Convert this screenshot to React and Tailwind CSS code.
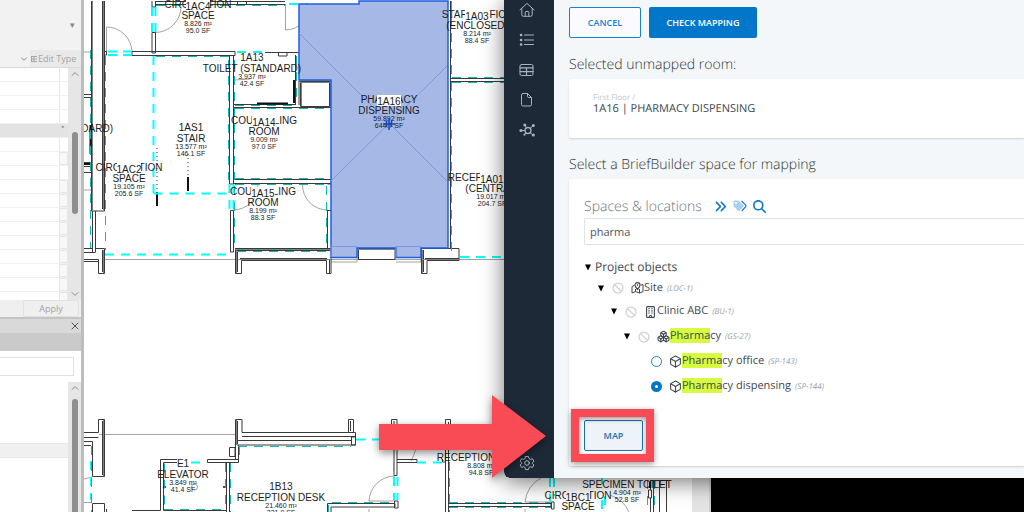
import { useState } from "react";
import { Ban, Box, Boxes, ChevronDown, ChevronUp, X } from "lucide-react";
import { FaAnglesRight, FaMagnifyingGlass } from "react-icons/fa6";

// tag is the room number, printed on a white plate over the first name line
const rooms = [
    { x: 198, y: 8, name: ["CIRCULATION", "SPACE"], tag: "1AC4", area: ["8.826 m²", "95.0 SF"] },
    { x: 129, y: 171, name: ["CIRCULATION", "SPACE"], tag: "1AC2", area: ["19.105 m²", "205.6 SF"] },
    { x: 264, y: 124, name: ["COUNSELING", "ROOM"], tag: "1A14", area: ["9.009 m²", "97.0 SF"] },
    { x: 263, y: 195, name: ["COUNSELING", "ROOM"], tag: "1A15", area: ["8.199 m²", "88.3 SF"] },
    { x: 389, y: 103, name: ["PHARMACY", "DISPENSING"], tag: "1A16", area: ["59.892 m²", "644.7 SF"] },
    { x: 477, y: 18, name: ["STAFF OFFICE", "(ENCLOSED)"], tag: "1A03", area: ["8.214 m²", "88.4 SF"] },
    { x: 492, y: 181, name: ["RECEPTION DESK", "(CENTRAL)"], tag: "1A01", area: ["19.017 m²", "204.7 SF"] },
    { x: 578, y: 499, name: ["CIRCULATION", "SPACE"], tag: "1BC1", area: ["11.204 m²", "120.6 SF"] },
    { x: 252, y: 61, name: ["1A13", "TOILET (STANDARD)"], area: ["3.937 m²", "42.4 SF"] },
    { x: 191, y: 131, name: ["1AS1", "STAIR"], area: ["13.577 m²", "146.1 SF"] },
    { x: 183, y: 467, name: ["E1", "ELEVATOR"], area: ["3.849 m²", "41.4 SF"] },
    { x: 281, y: 490, name: ["1B13", "RECEPTION DESK"], area: ["21.460 m²", "231.0 SF"] },
    { x: 481, y: 450, name: ["1B14", "RECEPTION DESK"], area: ["8.808 m²", "94.8 SF"] },
    { x: 627, y: 477, name: ["1B15", "SPECIMEN TOILET"], area: ["4.904 m²", "52.8 SF"] },
];

const RoomLabel = ({ room }) => {
    const { x, y, name, tag, area } = room;
    return (
        <g textAnchor="middle" fill="#1c1c1c">
            <text x={x} y={y} fontSize="10">{name[0]}</text>
            {tag && <rect x={x - 12} y={y - 8} width="24" height="11" fill="#fff" />}
            <text x={x} y={y + 11} fontSize="10">{name[1]}</text>
            {tag && <text x={x} y={y + 2} fontSize="10">{tag}</text>}
            <text x={x} y={y + 18} fontSize="7">{area[0]}</text>
            <text x={x} y={y + 25} fontSize="7">{area[1]}</text>
        </g>
    );
};

const FloorPlan = () => (
    <svg
        viewBox="84 0 608 512"
        preserveAspectRatio="xMinYMin slice"
        className="h-full min-w-0 flex-1 bg-white"
        fontFamily="'Liberation Sans', Arial, sans-serif"
    >
        {/* door swings and thin guide lines */}
        <g fill="none" stroke="#8b8b8b" strokeWidth="0.8">
            <path d="M106.500 53V27A25.500 25.500 0 0 1 132 52" />
            <path d="M155 32.500A26 26 0 0 0 181 7" />
            <path d="M285.500 4V30A26 26 0 0 0 311 4" />
            <path d="M302.500 185A25 25 0 0 0 328 210M233 210A25 25 0 0 0 258 184" />
            <path d="M104 259.500H504M99 434.500H237M84 52H92M84 190H92M84 479L92 477M84 502.500H92" />
            <path d="M235 80L250 79" />
            <path d="M395 476A26 26 0 0 0 369 501H395M369 509V512" />
            <path d="M411 461Q417 450 418 436" />
            <path d="M525 502A30 30 0 0 1 541 478M525 502H551M525 509V512" />
            <path d="M610 495Q624 500 629 512" />
            <path d="M331 246H357V262H331M396 246H421V262H396" />
            <circle cx="194.500" cy="487" r="3" />
        </g>

        {/* walls, drawn as double lines */}
        <g fill="none" stroke="#3a3a3a" strokeWidth="1">
            <path d="M91.500 1V211H104.500V1M102.500 1V209" />
            <path d="M92.500 211V252M95.500 211V252M84 252.500H95.500M84 248.500H92M95 248.500H104.500V273.500H98.500V259.500H84M84 261.500H98M102.500 250V272" />
            <path d="M84 94.500H91M84 97.500H91M84 162.500H91M84 166.500H91M84 172.500H91" />
            <path d="M104 51.500H106.500V55H104M132 51.500H235V55.500H132ZM152 1V7H155.500V1M152 32.500H155.500V53H152Z" />
            <path d="M155 1.500H285M155 4.500H285M237.500 1V4.500M246.500 1V4.500" />
            <path d="M229.500 55V184H233.500V55M230.500 210.500H233.500V252H230.500Z" />
            <path d="M265 52.500H299M278.500 52.500V56H287V52.500M234 104.500H295M234 107.500H331V81H299V105M295.500 55V105" />
            <path d="M300.500 81.500H329.500V106.500H300.500Z" />
            <path d="M234 179.500H331M234 183.500H331M327.500 210V248M327.500 210.500H331M327.500 184H331" />
            <path d="M235 248.500H331M235 250.500H331M235.500 248V273.500H241.500V260.500H326.500V273.500H331V248M240 258.500H327M237.500 250V272M329.500 260V273" />
            <path d="M358.500 248.500H395V259.500H358.500Z" />
            <path d="M421.500 249V273.500H427V260.500H459V248.500H421M423.500 250V272M425 258.500H459" />
            <path d="M450.500 1V248M447.500 1V248M451 78.500H504M451 81.500H504" />
            <path d="M98.500 437.500H84M84 432.500H98.500V419.500H104.500V476.500H92.500V441.500H84M102.500 421V475M84 445.500H91M92.500 512V503.500H104.500V512M106.500 509V512" />
            <path d="M235.500 460V419.500H242V432.500H355.500V445H237M242 436.500H355M238 440.500H351M351.500 437H355.500V445H351.500Z" />
            <path d="M237.500 421V444M348.500 432V419.500H353.500V432M350.500 421V431" />
            <path d="M229.500 447.500H235V456.500H229.500ZM207.500 459.500H238.500V462.500H207.500ZM238.500 445V462" />
            <path d="M177 459.500H160.500V510.500H132M177 462.500H163.500V510.500H226M226.500 462V512M229.500 462V512" />
            <path d="M391.500 432V419.500H397V475.500H394V421M445.500 512V419.500H450.500V432M448.500 422V512M397 459.500H417V462.500H397M442.500 459V462H445" />
            <path d="M327.500 512V503.500H395V507H331V512M394.500 501H398V508H394.500ZM449 503.500H551V506.500H449M551.500 502H554V509H551.500Z" />
            <path d="M648.500 490H651.500V498H648.500ZM650.500 480V490M650.500 498V512M653.500 480V512M659.500 480V512M666.500 480V512M650 480.500H668" />
        </g>
        <g fill="none" stroke="#808080" strokeWidth="1">
            <path d="M92.500 1V210M103.500 1V210M103.500 250V273M236.500 250V273M235 249.500H331M240 259.500H331" />
            <path d="M358 249.500H395M422.500 250V273M422 259.500H459M103.500 420V476M236.500 420V445M301.500 82V106M330.500 82V107M300 82.500H330" />
        </g>
        <g fill="none" stroke="#111" strokeWidth="2">
            <path d="M157 192V206M188 177V191M257 103.500H288M294 80V103M90.500 125V154M84 164H91M650 482V488" />
            <path d="M163 487H166M223 487H226" strokeWidth="1.500" />
        </g>
        <path d="M157 148V192M188 154V177" stroke="#333" strokeDasharray="1 3" />

        {/* room separation lines */}
        <g fill="none" stroke="#0ff" strokeWidth="2" strokeDasharray="9 7">
            <path d="M153.500 56V193M153.500 193.500H230M105 254.500H230M91 461V500" />
            <path d="M108 51.500H118M123 51.500H132M108 55H118M123 55H132M152 7V33M155.500 7V33" />
            <path d="M229.500 184V210M233.500 184V210M237 52H265M289 4H308M460 257H504" />
            <path d="M191 462.500H201M356 439.500H392M394 477V500M397.500 477V500M417 462.500H444" />
            <path d="M550 478V502M554 478V496M602 478V484M605 496V512M602 500V512" />
        </g>
        <g fill="none" stroke="#12b5b5" strokeWidth="1" strokeDasharray="9 7">
            <path d="M105.500 56V250M90.500 50V248M156 56.500H229M228.500 60V180M234.500 60V180M156 5.500H285" />
            <path d="M235 105.500H295M296.500 56V104M235 108.500H331M235 178.500H331M235 184.500H331M326.500 186V248M234.500 186V250" />
            <path d="M237 251.500H331M451.500 1V78M451.500 82V256M452 77.500H504M452 82.500H504" />
            <path d="M91.500 446V512M238 446.500H351M239.500 446V462M164.500 463.500V510M164 509.500H226M225.500 463V510M230.500 463V512" />
            <path d="M393.500 462V475M332 502.500H395M328.500 505V512M449.500 462V512M449 507.500H551M449 502.500H551M647.500 480V512M654.500 480V512" />
        </g>

        {/* selected room */}
        <path
            d="M299 4H359V1H448V248H421V257.500H396V248H357V257.500H331V80H299Z"
            fill="#a6b8e6"
            stroke="#1c5fdf"
            strokeWidth="1.500"
        />
        <path d="M299 33L447 181M447 66L331 181M331 246.500H357M396 246.500H421M331 246V257M396 246V257" fill="none" stroke="#7c98df" />

        <text x="113" y="132" fontSize="10" textAnchor="end" fill="#1c1c1c">(STANDARD)</text>
        {rooms.map((room) => (
            <RoomLabel key={room.tag || room.name[0]} room={room} />
        ))}
        <path d="M389 118V130M383 124H395M386.500 121V127M391.500 121V127" stroke="#1546b5" strokeWidth="1.500" />
    </svg>
);

const PropertyRow = ({ header, button }) => (
    <div className={`flex h-[14px] border-b border-[#f0f0f0] ${header ? "bg-[#e3e3e3]" : "bg-white"}`}>
        <div className="flex-1" />
        {header ? (
            <span className="pr-1 text-[7px] leading-[6px] text-[#888]">▪</span>
        ) : (
            <div className={`w-[9px] border-[#e6e6e6] ${button ? "border bg-[#f8f8f8]" : "border-l"}`} />
        )}
    </div>
);

const ScrollTrack = ({ children }) => (
    <div className="flex w-[13px] flex-col items-center bg-[#e6e6e6] text-[#8c8c8c]">{children}</div>
);

const PropertiesPanel = () => (
    <aside className="flex w-[84px] shrink-0 flex-col border-r-[3px] border-[#bdbdbd] bg-[#f2f2f2]">
        <div className="flex h-[50px] items-center justify-end pr-[6px] text-[9px] text-[#888]">▾</div>
        <div className="flex h-[18px] items-stretch border-b border-[#dadada]">
            <div className="flex flex-1 items-center justify-end pr-px text-[#777]">
                <ChevronDown size={10} />
            </div>
            <button className="flex w-[51px] items-center gap-px bg-[#e9e9e9] text-[9px] whitespace-nowrap text-[#a5a5a5]">
                <svg width="7" height="8" viewBox="0 0 7 8" fill="none" stroke="currentColor">
                    <path d="M1 1.500H7M1 4H7M1 6.500H7M1.500 1V7M4 1V7" />
                </svg>
                Edit Type
            </button>
        </div>
        <div className="flex h-[232px]">
            <div className="flex-1 overflow-hidden bg-white">
                {[...Array(17)].map((_, i) => (
                    <PropertyRow key={i} header={i === 4} button={i > 5 && i !== 7} />
                ))}
            </div>
            <ScrollTrack>
                <ChevronUp size={12} />
                <div className="mt-[52px] h-[82px] w-[6px] rounded-full bg-[#8f8f8f]" />
                <ChevronDown size={12} className="mt-auto" />
            </ScrollTrack>
        </div>
        <div className="flex h-[17px] justify-end bg-[#efefef] pr-[2px]">
            <button className="w-[56px] rounded-xs border border-[#e2e2e2] text-[9px] leading-[14px] text-[#a3a3a3]">Apply</button>
        </div>
        <div className="flex h-[16px] items-center justify-end border-t-2 border-[#c4c4c4] bg-[#d9d9d9] text-[#555]">
            <X size={12} />
        </div>
        <div className="h-[18px] bg-[#cacaca]" />
        <div className="flex flex-1 flex-col bg-white">
            <input aria-label="Search project browser" className="mt-[6px] mr-[7px] h-[19px] border border-l-0 border-[#e0e0e0] bg-white" />
            <div className="mt-[6px] flex flex-1">
                <div className="flex-1 pt-[61px]">
                    <div className="h-[15px] border-y border-[#e8e8e8] bg-[#f0f0f0]" />
                </div>
                <ScrollTrack>
                    <ChevronUp size={12} />
                    <div className="mt-[5px] w-[6px] flex-1 rounded-t-full bg-[#8f8f8f]" />
                </ScrollTrack>
            </div>
        </div>
    </aside>
);

const NavIcon = ({ label, children }) => (
    <a href="#" aria-label={label} className="flex h-[30px] items-center justify-center text-[#aab2bb]">
        <svg width="16" height="16" viewBox="0 0 16 16" fill="none" stroke="currentColor" strokeLinejoin="round" strokeLinecap="round">
            {children}
        </svg>
    </a>
);

const Sidebar = () => (
    <nav className="flex w-[50px] shrink-0 flex-col rounded-bl-md bg-[#1e2938] pr-1">
        <div className="-mt-[5px] flex flex-1 flex-col">
            <NavIcon label="Home">
                <path d="M1 7.800L8 1.500L15 7.800M2.800 6.500V12.800Q2.800 14.300 4.300 14.300H11.700Q13.200 14.300 13.200 12.800V6.500M6.200 14V10.200Q6.200 9.500 6.900 9.500H9.100Q9.800 9.500 9.800 10.200V14" />
            </NavIcon>
            <NavIcon label="List">
                <path d="M5.500 3H14.500M5.500 8H14.500M5.500 12.500H14.500" />
                <path d="M2 3H2.200M2 8H2.200M2 12.500H2.200" strokeWidth="2.500" />
            </NavIcon>
            <NavIcon label="Table">
                <rect x="1" y="2.500" width="13" height="11" rx="1.500" />
                <path d="M1 5.800H14M1 9.600H14M7.500 5.800V13.500" strokeWidth="1.200" />
            </NavIcon>
            <NavIcon label="Documents">
                <path d="M4 1.500H8.500L12.500 5.500V12.500Q12.500 14 11 14H4Q2.500 14 2.500 12.500V3Q2.500 1.500 4 1.500ZM8.500 1.500V4.300Q8.500 5.500 9.700 5.500H12.500" />
            </NavIcon>
            <NavIcon label="Relations">
                <circle cx="9" cy="8.500" r="3" strokeWidth="1.300" />
                <path d="M6 8.500H2M7.500 6L6 3.500M11.200 6.300L14 3.800M11.200 10.700L14 13M7 10.700L5.500 12.500" />
                <g fill="currentColor" stroke="none">
                    <circle cx="2" cy="8.500" r="1.600" />
                    <circle cx="5.800" cy="3" r="1.500" />
                    <circle cx="14.300" cy="3.500" r="1.500" />
                    <circle cx="14.300" cy="13" r="1.500" />
                    <circle cx="5.500" cy="12.700" r="1.100" />
                </g>
            </NavIcon>
        </div>
        <NavIcon label="Settings">
            <circle cx="8" cy="8" r="2.300" />
            <path d="M6.500 1.500H9.500L10 3.600L11.300 4.400L13.400 3.700L14.900 6.300L13.300 7.800V8.500L14.900 9.900L13.400 12.400L11.300 11.700L10 12.500L9.500 14.600H6.500L6 12.500L4.700 11.700L2.600 12.400L1.100 9.900L2.700 8.500V7.800L1.100 6.300L2.600 3.700L4.700 4.400L6 3.600Z" />
        </NavIcon>
    </nav>
);

const MapIcon = () => (
    <svg width="13" height="12" viewBox="0 0 13 12" fill="none" stroke="currentColor" strokeLinejoin="round">
        <path d="M3 3.500L1 4.500V11L4.500 9.600L8.500 11L12 9.600V2.500L10 3.200M4.500 7V9.600M8.500 7V11" />
        <path d="M6.500 7.500Q3.900 4.500 3.900 3.100A2.600 2.500 0 0 1 9.100 3.100Q9.100 4.500 6.500 7.500Z" strokeWidth="1.200" />
        <circle cx="6.500" cy="3.100" r="0.800" fill="currentColor" stroke="none" />
    </svg>
);

const BuildingIcon = () => (
    <svg width="9" height="12" viewBox="0 0 9 12" fill="none" stroke="currentColor">
        <rect x="0.600" y="0.600" width="7.800" height="10.800" rx="1" strokeWidth="1.100" />
        <path d="M2.300 2.800H3.700M5.300 2.800H6.700M2.300 4.900H3.700M5.300 4.900H6.700M2.300 7H3.700M5.300 7H6.700" strokeWidth="1.100" />
        <path d="M3.500 11.400V9.500H5.500V11.400" strokeWidth="0.900" />
    </svg>
);

const TagsIcon = () => (
    <svg width="14" height="12" viewBox="0 0 14 12">
        <path d="M0.500 1.500Q0.500 0.500 1.500 0.500H5.500L10.500 5.200Q11 5.900 10.500 6.600L6.500 10.800Q5.800 11.400 5.100 10.800L0.500 6.200Z" fill="#a9d0ef" />
        <circle cx="3" cy="3" r="1" fill="#fff" />
        <path d="M8.500 1L12.500 4.800Q13.400 5.800 12.500 6.900L8.800 11" fill="none" stroke="#1379cb" strokeWidth="1.200" />
    </svg>
);

const Caret = () => (
    <svg width="6" height="7" viewBox="0 0 6 7" className="text-black">
        <path d="M0 0.500H6L3 6.500Z" fill="currentColor" />
    </svg>
);

const groups = [
    { name: "Site", code: "LOC-1", icon: <MapIcon />, indent: "pl-[13px]" },
    { name: "Clinic ABC", code: "BU-1", icon: <BuildingIcon />, indent: "pl-[26px]" },
    { name: "Pharmacy", code: "GS-27", icon: <Boxes size={13} />, indent: "pl-[39px]" },
];

const spaces = [
    { name: "Pharmacy office", code: "SP-143" },
    { name: "Pharmacy dispensing", code: "SP-144" },
];

const Label = ({ name, code, query }) => {
    const hit = query && name.toLowerCase().startsWith(query.toLowerCase());
    return (
        <span className="whitespace-nowrap">
            {hit ? <mark className="bg-[#d6fb41] text-inherit">{name.slice(0, query.length)}</mark> : null}
            {hit ? name.slice(query.length) : name}
            <span className="ml-1 text-[8px] text-[#98a1a9] italic">({code})</span>
        </span>
    );
};

const MappingWindow = () => {
    const [query, setQuery] = useState("pharma");
    const [selected, setSelected] = useState("SP-144");

    return (
        <section className="absolute top-0 right-0 left-[504px] flex overflow-hidden rounded-bl-md bg-[#f3f7f9] shadow-[0_4px_22px_rgba(0,0,0,0.55)] [text-rendering:geometricPrecision]">
            <Sidebar />
            <main className="min-w-0 flex-1 pt-[7px] pb-3 pl-[15px]">
                <div className="flex gap-2 text-[9px] font-semibold">
                    <button className="h-[31px] w-[72px] rounded-xs border border-[#1b80cf] bg-[#fafaff] text-[#1b80cf]">CANCEL</button>
                    <button className="h-[31px] w-[108px] rounded-xs bg-[#0277ca] text-white">CHECK MAPPING</button>
                </div>

                <h2 className="mt-4 text-[14px] leading-[22px] font-light text-[#333]">Selected unmapped room:</h2>
                <div className="mt-[3px] h-[59px] rounded-l-xs bg-white pt-[14px] pl-6 shadow-[0_1px_2px_rgba(0,0,0,0.15)]">
                    <p className="text-[8px] leading-[10px] text-[#c0c8ce]">First Floor /</p>
                    <p className="text-[11px] leading-[11px] text-[#3c444b]">1A16 | PHARMACY DISPENSING</p>
                </div>

                <h2 className="mt-4 text-[14px] leading-[22px] font-light text-[#333]">Select a BriefBuilder space for mapping</h2>
                <div className="mt-[3px] rounded-l-xs bg-white pt-[15px] pb-[15px] pl-[15px] shadow-[0_1px_2px_rgba(0,0,0,0.15)]">
                    <div className="flex h-[24px] items-center text-[#1379cb]">
                        <label htmlFor="space-search" className="mr-3 text-[14px] font-light text-[#6a747c]">Spaces &amp; locations</label>
                        <button aria-label="Expand all" className="mr-[6px]"><FaAnglesRight size={13} /></button>
                        <button aria-label="Tags" className="mr-[6px]"><TagsIcon /></button>
                        <button aria-label="Search"><FaMagnifyingGlass size={13} /></button>
                    </div>
                    <input
                        id="space-search"
                        type="text"
                        value={query}
                        onChange={(e) => setQuery(e.target.value)}
                        className="block h-[27px] w-full rounded-l-xs border border-r-0 border-[#dde4e9] px-[5px] text-[11px] text-[#4b555d] outline-none"
                    />

                    <div className="mt-3 text-[11px] text-[#3f4850]">
                        <div className="flex h-[20px] items-center gap-1 pl-px text-[12px]">
                            <Caret />
                            Project objects
                        </div>
                        {groups.map((group, i) => (
                            <div key={group.code} className={`flex items-center ${group.indent} ${i === 0 ? "h-[22px]" : "h-[25px]"}`}>
                                <span className="w-[15px] pl-px"><Caret /></span>
                                <Ban size={12} strokeWidth={2.5} className="text-[#cfd2d5]" />
                                <span className="ml-[6px] flex w-[14px] justify-center">{group.icon}</span>
                                <Label name={group.name} code={group.code} query={query} />
                            </div>
                        ))}
                        {spaces.map((space) => (
                            <label key={space.code} className="flex h-[25px] items-center pl-[67px]">
                                <input
                                    type="radio"
                                    name="space"
                                    checked={selected === space.code}
                                    onChange={() => setSelected(space.code)}
                                    className="size-[11px] appearance-none rounded-full border border-[#1b80cf] bg-white checked:border-4 checked:border-[#0277ca]"
                                />
                                <span className="ml-[6px] flex w-[14px] justify-center"><Box size={13} /></span>
                                <Label name={space.name} code={space.code} query={query} />
                            </label>
                        ))}
                    </div>

                    <div className="relative mt-[21px] w-[59px]">
                        <button className="block h-[31px] w-full rounded-xs border border-[#1b6fb3] bg-[#edf3f9] text-[9px] font-semibold text-[#1b6fb3]">MAP</button>
                        <div className="pointer-events-none absolute -inset-y-[11px] -right-[11px] -left-[13px] border-8 border-[#f94b55] shadow-[0_2px_6px_rgba(0,0,0,0.4),inset_0_2px_5px_rgba(0,0,0,0.4)]" />
                    </div>
                </div>
            </main>
        </section>
    );
};

const Arrow = () => (
    <svg
        width="167"
        height="84"
        viewBox="0 0 167 84"
        className="absolute top-[394px] left-[379px] overflow-visible drop-shadow-[0_3px_4px_rgba(0,0,0,0.45)]"
    >
        <path d="M0 30H113V1L167 42L113 84V56H0Z" fill="#f94b55" />
    </svg>
);

export default function App() {
    return (
        <div className="relative flex h-screen w-full overflow-hidden bg-black font-['Open_Sans','Noto_Sans',sans-serif]">
            <div className="flex h-full w-[711px] bg-white">
                <PropertiesPanel />
                <FloorPlan />
                <div className="w-[19px] border-r-2 border-[#cfcfcf] bg-[#e4e4e4]" />
            </div>
            <MappingWindow />
            <Arrow />
        </div>
    );
}
